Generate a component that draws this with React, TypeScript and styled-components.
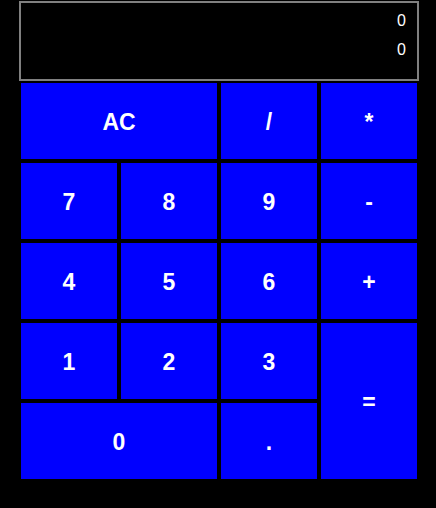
import React from "react";
import styled, { createGlobalStyle } from "styled-components";

const GlobalStyle = createGlobalStyle`
  html, body {
    margin: 0;
    padding: 0;
    background: #000;
    height: 100%;
  }
  body {
    font-family: "Liberation Sans", Arial, sans-serif;
  }
`;

const Calculator = styled.div`
  width: 400px;
  padding: 1px 0 0 19px;
`;

const Display = styled.div`
  box-sizing: border-box;
  height: 80px;
  border: 2px solid #808080;
  padding: 3px 11px 0 0;
  color: #fff;
  text-align: right;
  font-size: 16px;
`;

const DisplayLine = styled.div`
  line-height: 29px;
`;

const Keys = styled.div`
  display: grid;
  grid-template-columns: repeat(4, 100px);
  grid-auto-rows: 80px;
`;

const Key = styled.button<{ $wide?: boolean; $tall?: boolean }>`
  box-sizing: border-box;
  border: 2px solid #000;
  background: #0000ff;
  color: #fff;
  font-family: "Liberation Sans", Arial, sans-serif;
  font-weight: 700;
  font-size: 23px;
  padding: 2px 0 0;
  margin: 0;
  grid-column: ${(p) => (p.$wide ? "span 2" : "auto")};
  grid-row: ${(p) => (p.$tall ? "span 2" : "auto")};
`;

export default function App() {
  return (
    <>
      <GlobalStyle />
      <Calculator>
        <Display>
          <DisplayLine>0</DisplayLine>
          <DisplayLine>0</DisplayLine>
        </Display>
        <Keys>
          <Key $wide>AC</Key>
          <Key>/</Key>
          <Key>*</Key>
          <Key>7</Key>
          <Key>8</Key>
          <Key>9</Key>
          <Key>-</Key>
          <Key>4</Key>
          <Key>5</Key>
          <Key>6</Key>
          <Key>+</Key>
          <Key>1</Key>
          <Key>2</Key>
          <Key>3</Key>
          <Key $tall style={{ gridColumn: 4, gridRow: "4 / span 2" }}>=</Key>
          <Key $wide>0</Key>
          <Key>.</Key>
        </Keys>
      </Calculator>
    </>
  );
}
